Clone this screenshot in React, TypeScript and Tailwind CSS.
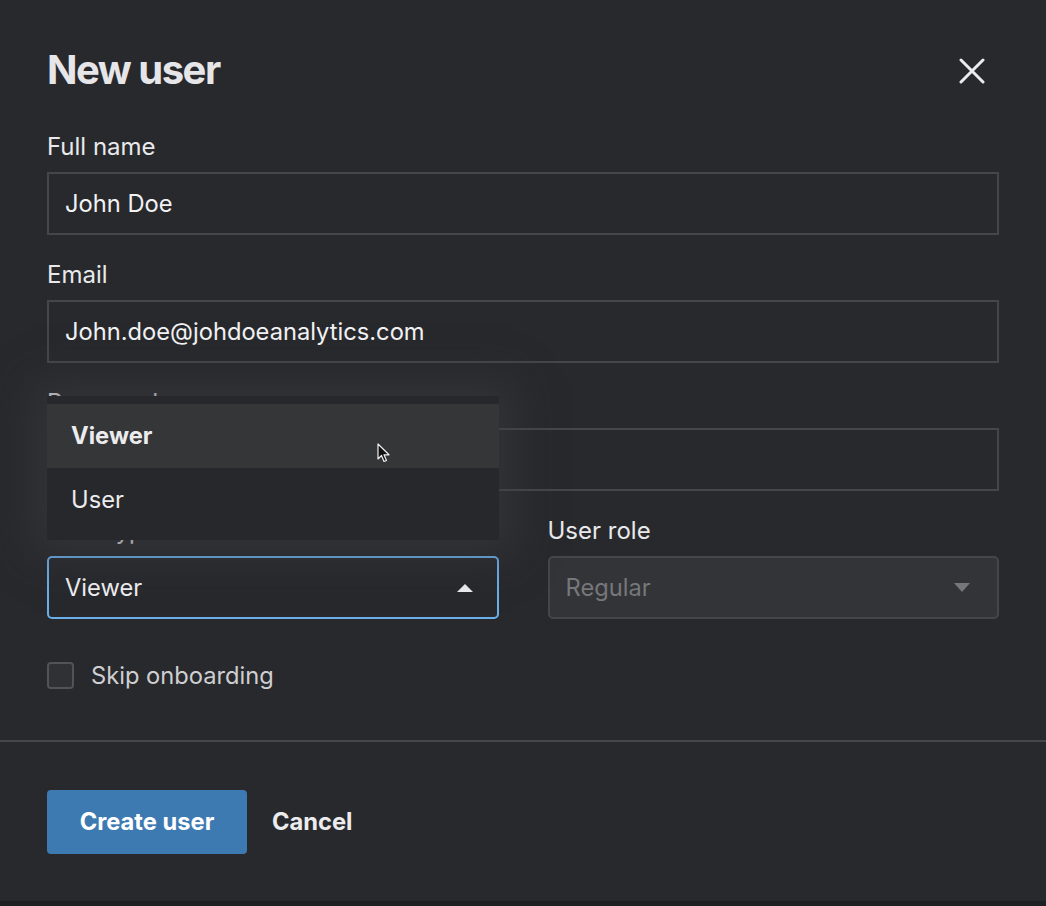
import React from "react";

const font = { fontFamily: "Inter, 'Noto Sans', sans-serif" };

function Field({ label, value }: { label: string; value?: string }) {
  return (
    <div className="flex flex-col">
      <div className="text-[24px] leading-[32px] text-[#e9e9eb] mb-[9px]">{label}</div>
      <div className="h-[63px] border-2 border-[#45464a] flex items-center px-[16px] text-[23.7px] text-[#f2f2f4]">
        {value}
      </div>
    </div>
  );
}

export default function App() {
  return (
    <div className="w-[1046px] h-[906px] bg-[#1f2023]" style={font}>
      <div className="relative h-[901px] bg-[#28292d] flex flex-col">
        <div className="px-[47px] pt-[46px]">
          <div className="flex items-center justify-between h-[48px]">
            <h1 className="text-[40px] leading-[48px] font-bold text-[#e6e6e8] tracking-[-1.5px]">New user</h1>
            <svg width="26" height="26" viewBox="0 0 26 26" className="mr-[14px] mt-[2px]">
              <path d="M2 2 L24 24 M24 2 L2 24" stroke="#ececee" strokeWidth="3" strokeLinecap="round" />
            </svg>
          </div>

          <div className="mt-[37px] flex flex-col gap-[24px]">
            <Field label="Full name" value="John Doe" />
            <Field label="Email" value="John.doe@johdoeanalytics.com" />
            <Field label="Password" />
            <div className="grid grid-cols-2 gap-[49px]">
              <div className="flex flex-col">
                <div className="text-[24px] leading-[32px] text-[#e9e9eb] mb-[9px]">User type</div>
                <div className="h-[63px] border-2 border-[#6aaeea] rounded-[5px] flex items-center justify-between pl-[16px] pr-[24px] text-[23.7px] text-[#f0f0f2]">
                  <span>Viewer</span>
                  <svg width="16" height="8" viewBox="0 0 16 8">
                    <path d="M0 8 L8 0 L16 8 Z" fill="#ececee" />
                  </svg>
                </div>
              </div>
              <div className="flex flex-col">
                <div className="text-[24px] leading-[32px] text-[#e9e9eb] mb-[9px]">User role</div>
                <div className="h-[63px] border-2 border-[#45464a] bg-[#333437] rounded-[5px] flex items-center justify-between pl-[16px] pr-[27px] text-[23.7px] text-[#76777b]">
                  <span>Regular</span>
                  <svg width="16" height="9" viewBox="0 0 16 9">
                    <path d="M0 0 L8 9 L16 0 Z" fill="#76777b" />
                  </svg>
                </div>
              </div>
            </div>
          </div>

          <div className="mt-[43px] flex items-center gap-[17px] h-[27px]">
            <div className="w-[27px] h-[27px] border-2 border-[#525357] bg-[#303134] rounded-[4px]" />
            <span className="text-[23.7px] text-[#cfcfd1]">Skip onboarding</span>
          </div>
        </div>

        <div className="mt-[51px] h-[2px] bg-[#46474b]" />

        <div className="px-[47px] pt-[48px] flex items-center">
          <button className="w-[200px] h-[64px] bg-[#3e7ab2] rounded-[4px] text-white text-[23.7px] font-bold">
            Create user
          </button>
          <button className="ml-[25px] text-[23.7px] font-bold text-[#ececee]">Cancel</button>
        </div>

        {/* dropdown menu overlay */}
        <div className="absolute left-[47px] top-[396px] w-[452px] bg-[#27282b] py-[8px] shadow-[0_0_40px_14px_rgba(60,61,65,0.55)]">
          <div className="relative h-[64px] bg-[#353638] flex items-center pl-[24px] text-[23.7px] font-bold text-[#ececee]">
            Viewer
            <svg width="14" height="21" viewBox="0 0 14 21" className="absolute left-[330px] top-[39px]">
              <path d="M1 1 L1 16 L4.5 12.5 L7 18.5 L9.5 17.5 L7 11.8 L12 11.8 Z" fill="#111" stroke="#eee" strokeWidth="1.2" strokeLinejoin="round" />
            </svg>
          </div>
          <div className="h-[64px] flex items-center pl-[24px] text-[23.7px] text-[#ececee]">User</div>
        </div>
      </div>
    </div>
  );
}
